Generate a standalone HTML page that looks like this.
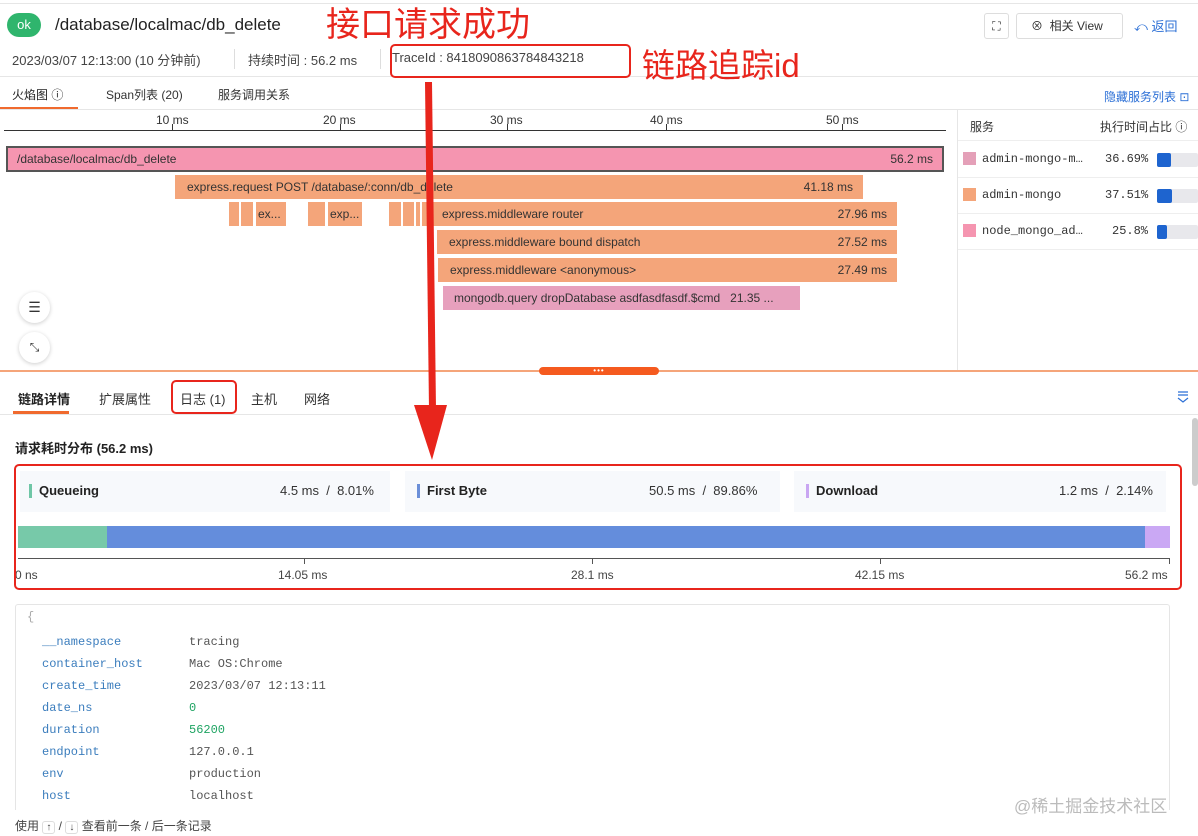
<!DOCTYPE html>
<html><head><meta charset="utf-8"><style>
*{margin:0;padding:0;box-sizing:border-box}
body{width:1198px;height:836px;position:relative;overflow:hidden;background:#fff;font-family:"Liberation Sans","Noto Sans CJK SC",sans-serif;color:#333;font-size:13px}
.a{position:absolute;white-space:nowrap}
.mono{font-family:"Liberation Mono","DejaVu Sans Mono",monospace}
.bar{position:absolute;height:24px;line-height:24px;font-size:12px;color:#333;padding-left:12px;overflow:hidden}
.or{background:#f4a57a}
.rd{color:#e8251c}
.tick{position:absolute;top:124px;width:1px;height:7px;background:#333}
.tl{position:absolute;top:113px;font-size:12px;color:#333}
.key{color:#3b7dbd}
.val{color:#555}
</style></head><body>
<div class="a" style="left:0;top:3px;width:1198px;height:1px;background:#e6e6e6"></div>
<div class="a" style="left:7px;top:13px;width:34px;height:24px;border-radius:12px;background:#2fb56d;color:#fff;font-size:13px;line-height:24px;text-align:center">ok</div>
<div class="a" style="left:55px;top:15px;font-size:17px;color:#222">/database/localmac/db_delete</div>
<div class="a" style="left:0;top:76px;width:1198px;height:1px;background:#e6e6e6"></div>
<div class="a rd" style="left:326px;top:4px;font-size:34px;line-height:42px;z-index:5">接口请求成功</div>
<div class="a" style="left:12px;top:50px;font-size:13px;color:#444">2023/03/07 12:13:00 (10 分钟前)</div>
<div class="a" style="left:234px;top:49px;width:1px;height:20px;background:#ddd"></div>
<div class="a" style="left:248px;top:50px;font-size:13px;color:#444">持续时间 : 56.2 ms</div>
<div class="a" style="left:380px;top:49px;width:1px;height:20px;background:#ddd"></div>
<div class="a" style="left:392px;top:50px;font-size:13px;color:#444">TraceId : 8418090863784843218</div>
<div class="a" style="left:390px;top:44px;width:241px;height:34px;border:2.5px solid #e8251c;border-radius:5px"></div>
<div class="a rd" style="left:642px;top:44px;font-size:33px;line-height:44px;z-index:5">链路追踪id</div>
<div class="a" style="left:984px;top:13px;width:25px;height:26px;border:1px solid #ddd;border-radius:3px;font-size:12px;text-align:center;line-height:24px;color:#333">⛶</div>
<div class="a" style="left:1016px;top:13px;width:107px;height:26px;border:1px solid #ddd;border-radius:3px;font-size:12px;line-height:24px;padding-left:14px;color:#333">⊗&nbsp; 相关 View</div>
<div class="a" style="left:1134px;top:16px;font-size:13px;color:#2b6fd6">⤺ 返回</div>
<div class="a" style="left:12px;top:86px;font-size:12px;color:#222">火焰图 ⓘ</div>
<div class="a" style="left:106px;top:86px;font-size:12px;color:#333">Span列表 (20)</div>
<div class="a" style="left:218px;top:86px;font-size:12px;color:#333">服务调用关系</div>
<div class="a" style="left:1104px;top:88px;font-size:12px;color:#2b6fd6">隐藏服务列表 ⊡</div>
<div class="a" style="left:0;top:107px;width:78px;height:2px;background:#f06a2e"></div>
<div class="a" style="left:0;top:109px;width:1198px;height:1px;background:#e6e6e6"></div>
<!-- axis -->
<div class="a" style="left:4px;top:130px;width:942px;height:1px;background:#333"></div>
<div class="tick" style="left:172px"></div><div class="tl" style="left:156px">10 ms</div>
<div class="tick" style="left:340px"></div><div class="tl" style="left:323px">20 ms</div>
<div class="tick" style="left:507px"></div><div class="tl" style="left:490px">30 ms</div>
<div class="tick" style="left:666px"></div><div class="tl" style="left:650px">40 ms</div>
<div class="tick" style="left:842px"></div><div class="tl" style="left:826px">50 ms</div>
<!-- flame -->
<div class="bar" style="left:6px;top:146px;width:938px;height:26px;background:#f595b0;border:2px solid #555;line-height:22px;padding-left:9px">/database/localmac/db_delete<span style="position:absolute;right:9px">56.2 ms</span></div>
<div class="bar or" style="left:175px;top:175px;width:688px">express.request POST /database/:conn/db_delete<span style="position:absolute;right:10px">41.18 ms</span></div>
<div class="bar or" style="left:229px;top:202px;width:10px;padding:0"></div>
<div class="bar or" style="left:241px;top:202px;width:12px;padding:0"></div>
<div class="bar or" style="left:256px;top:202px;width:30px;padding-left:2px">ex...</div>
<div class="bar or" style="left:308px;top:202px;width:17px;padding:0"></div>
<div class="bar or" style="left:328px;top:202px;width:34px;padding-left:2px">exp...</div>
<div class="bar or" style="left:389px;top:202px;width:12px;padding:0"></div>
<div class="bar or" style="left:403px;top:202px;width:11px;padding:0"></div>
<div class="bar or" style="left:416px;top:202px;width:4px;padding:0"></div>
<div class="bar or" style="left:422px;top:202px;width:475px;padding-left:20px">express.middleware router<span style="position:absolute;right:10px">27.96 ms</span></div>
<div class="bar or" style="left:437px;top:230px;width:460px">express.middleware bound dispatch<span style="position:absolute;right:10px">27.52 ms</span></div>
<div class="bar or" style="left:438px;top:258px;width:459px">express.middleware &lt;anonymous&gt;<span style="position:absolute;right:10px">27.49 ms</span></div>
<div class="bar" style="left:443px;top:286px;width:357px;background:#e7a0bd;padding-left:11px">mongodb.query dropDatabase asdfasdfasdf.$cmd&nbsp;&nbsp; 21.35 ...</div>
<div class="a" style="left:19px;top:292px;width:31px;height:31px;border-radius:50%;background:#fff;box-shadow:0 1px 4px rgba(0,0,0,.2);text-align:center;line-height:30px;font-size:14px">☰</div>
<div class="a" style="left:19px;top:332px;width:31px;height:31px;border-radius:50%;background:#fff;box-shadow:0 1px 4px rgba(0,0,0,.2);text-align:center;line-height:30px;font-size:12px">⤡</div>
<!-- service panel -->
<div class="a" style="left:957px;top:110px;width:1px;height:260px;background:#e6e6e6"></div>
<div class="a" style="left:970px;top:118px;font-size:12px">服务</div>
<div class="a" style="left:1100px;top:118px;font-size:12px">执行时间占比 ⓘ</div>
<div class="a" style="left:958px;top:140px;width:240px;height:1px;background:#eee"></div>
<div class="a" style="left:958px;top:177px;width:240px;height:1px;background:#eee"></div>
<div class="a" style="left:958px;top:213px;width:240px;height:1px;background:#eee"></div>
<div class="a" style="left:958px;top:249px;width:240px;height:1px;background:#eee"></div>
<div class="a" style="left:963px;top:152px;width:13px;height:13px;background:#e4a0b8"></div>
<div class="a mono" style="left:982px;top:152px;font-size:12px">admin-mongo-m…</div>
<div class="a mono" style="left:1105px;top:152px;font-size:12px">36.69%</div>
<div class="a" style="left:963px;top:188px;width:13px;height:13px;background:#f4a57a"></div>
<div class="a mono" style="left:982px;top:188px;font-size:12px">admin-mongo</div>
<div class="a mono" style="left:1105px;top:188px;font-size:12px">37.51%</div>
<div class="a" style="left:963px;top:224px;width:13px;height:13px;background:#f595b0"></div>
<div class="a mono" style="left:982px;top:224px;font-size:12px">node_mongo_ad…</div>
<div class="a mono" style="left:1112px;top:224px;font-size:12px">25.8%</div>
<div class="a" style="left:1157px;top:153px;width:41px;height:14px;background:#e8e8ec;border-radius:2px"><div style="width:14px;height:14px;background:#1e64cf;border-radius:2px"></div></div>
<div class="a" style="left:1157px;top:189px;width:41px;height:14px;background:#e8e8ec;border-radius:2px"><div style="width:15px;height:14px;background:#1e64cf;border-radius:2px"></div></div>
<div class="a" style="left:1157px;top:225px;width:41px;height:14px;background:#e8e8ec;border-radius:2px"><div style="width:10px;height:14px;background:#1e64cf;border-radius:2px"></div></div>
<!-- divider -->
<div class="a" style="left:0;top:370px;width:1198px;height:2px;background:#f5a57a"></div>
<div class="a" style="left:539px;top:367px;width:120px;height:8px;background:#f55a1f;border-radius:4px;color:#fff;font-size:8px;line-height:7px;text-align:center;letter-spacing:1px">•••</div>
<!-- tabs2 -->
<div class="a" style="left:18px;top:389px;font-size:13px;font-weight:bold;color:#222">链路详情</div>
<div class="a" style="left:13px;top:411px;width:56px;height:3px;background:#f06a2e"></div>
<div class="a" style="left:99px;top:389px;font-size:13px">扩展属性</div>
<div class="a" style="left:180px;top:389px;font-size:13px">日志 (1)</div>
<div class="a" style="left:171px;top:380px;width:66px;height:34px;border:2.5px solid #e8251c;border-radius:5px"></div>
<div class="a" style="left:251px;top:389px;font-size:13px">主机</div>
<div class="a" style="left:304px;top:389px;font-size:13px">网络</div>
<svg class="a" style="left:1176px;top:390px" width="14" height="14" viewBox="0 0 14 14"><path d="M2 2h10M2 5h10M2 8l5 4 5-4" fill="none" stroke="#2b6fd6" stroke-width="1.2"/></svg>
<div class="a" style="left:0;top:414px;width:1198px;height:1px;background:#e6e6e6"></div>
<div class="a" style="left:1192px;top:418px;width:6px;height:68px;background:#ccc;border-radius:3px"></div>
<div class="a" style="left:15px;top:438px;font-size:13px;font-weight:bold;color:#222">请求耗时分布 (56.2 ms)</div>
<!-- cards -->
<div class="a" style="left:20px;top:471px;width:370px;height:41px;background:#f7f9fc"></div>
<div class="a" style="left:405px;top:471px;width:375px;height:41px;background:#f7f9fc"></div>
<div class="a" style="left:794px;top:471px;width:372px;height:41px;background:#f7f9fc"></div>
<div class="a" style="left:29px;top:484px;width:3px;height:14px;background:#6fc6a6"></div>
<div class="a" style="left:39px;top:483px;font-size:13px;font-weight:bold;color:#222">Queueing</div>
<div class="a" style="left:280px;top:483px;font-size:13px">4.5 ms&nbsp; / &nbsp;8.01%</div>
<div class="a" style="left:417px;top:484px;width:3px;height:14px;background:#6b8fd8"></div>
<div class="a" style="left:427px;top:483px;font-size:13px;font-weight:bold;color:#222">First Byte</div>
<div class="a" style="left:649px;top:483px;font-size:13px">50.5 ms&nbsp; / &nbsp;89.86%</div>
<div class="a" style="left:806px;top:484px;width:3px;height:14px;background:#c9a6f2"></div>
<div class="a" style="left:816px;top:483px;font-size:13px;font-weight:bold;color:#222">Download</div>
<div class="a" style="left:1059px;top:483px;font-size:13px">1.2 ms&nbsp; / &nbsp;2.14%</div>
<div class="a" style="left:18px;top:526px;width:89px;height:22px;background:#77c9a9"></div>
<div class="a" style="left:107px;top:526px;width:1038px;height:22px;background:#648ddc"></div>
<div class="a" style="left:1145px;top:526px;width:25px;height:22px;background:#caa8f4"></div>
<div class="a" style="left:18px;top:558px;width:1152px;height:1px;background:#555"></div>
<div class="a" style="left:304px;top:558px;width:1px;height:6px;background:#555"></div>
<div class="a" style="left:592px;top:558px;width:1px;height:6px;background:#555"></div>
<div class="a" style="left:880px;top:558px;width:1px;height:6px;background:#555"></div>
<div class="a" style="left:1169px;top:558px;width:1px;height:6px;background:#555"></div>
<div class="a" style="left:15px;top:568px;font-size:12px;color:#444">0 ns</div>
<div class="a" style="left:278px;top:568px;font-size:12px;color:#444">14.05 ms</div>
<div class="a" style="left:571px;top:568px;font-size:12px;color:#444">28.1 ms</div>
<div class="a" style="left:855px;top:568px;font-size:12px;color:#444">42.15 ms</div>
<div class="a" style="left:1125px;top:568px;font-size:12px;color:#444">56.2 ms</div>
<div class="a" style="left:14px;top:464px;width:1168px;height:126px;border:2.5px solid #e8251c;border-radius:5px"></div>
<!-- json -->
<div class="a" style="left:15px;top:604px;width:1155px;height:210px;border:1px solid #e5e5e5;border-bottom:none;border-radius:3px 3px 0 0"></div>
<div class="a mono" style="left:27px;top:610px;font-size:12px;color:#aaa">{</div>
<div class="a mono" style="left:42px;top:631px;font-size:12px;line-height:22px"><span class="key">__namespace<br>container_host<br>create_time<br>date_ns<br>duration<br>endpoint<br>env<br>host<br>http_method</span></div>
<div class="a mono val" style="left:189px;top:631px;font-size:12px;line-height:22px">tracing<br>Mac OS:Chrome<br>2023/03/07 12:13:11<br><span style="color:#1fa463">0</span><br><span style="color:#1fa463">56200</span><br>127.0.0.1<br>production<br>localhost<br>POST</div>
<div class="a" style="left:0;top:810px;width:1170px;height:26px;background:#fff"></div>
<div class="a" style="left:15px;top:817px;font-size:12px;color:#444">使用 <span style="display:inline-block;border:1px solid #ddd;border-radius:3px;padding:0 3px;font-size:10px">↑</span> / <span style="display:inline-block;border:1px solid #ddd;border-radius:3px;padding:0 3px;font-size:10px">↓</span> 查看前一条 / 后一条记录</div>
<div class="a" style="left:1014px;top:792px;font-size:17px;color:#bbb">@稀土掘金技术社区</div>
<!-- red arrow -->
<svg class="a" style="left:0;top:0" width="1198" height="836"><polygon points="425,82 432,82 436,410 429,410" fill="#e8251c"/><polygon points="414,405 447,405 432,460" fill="#e8251c"/></svg>
</body></html>
